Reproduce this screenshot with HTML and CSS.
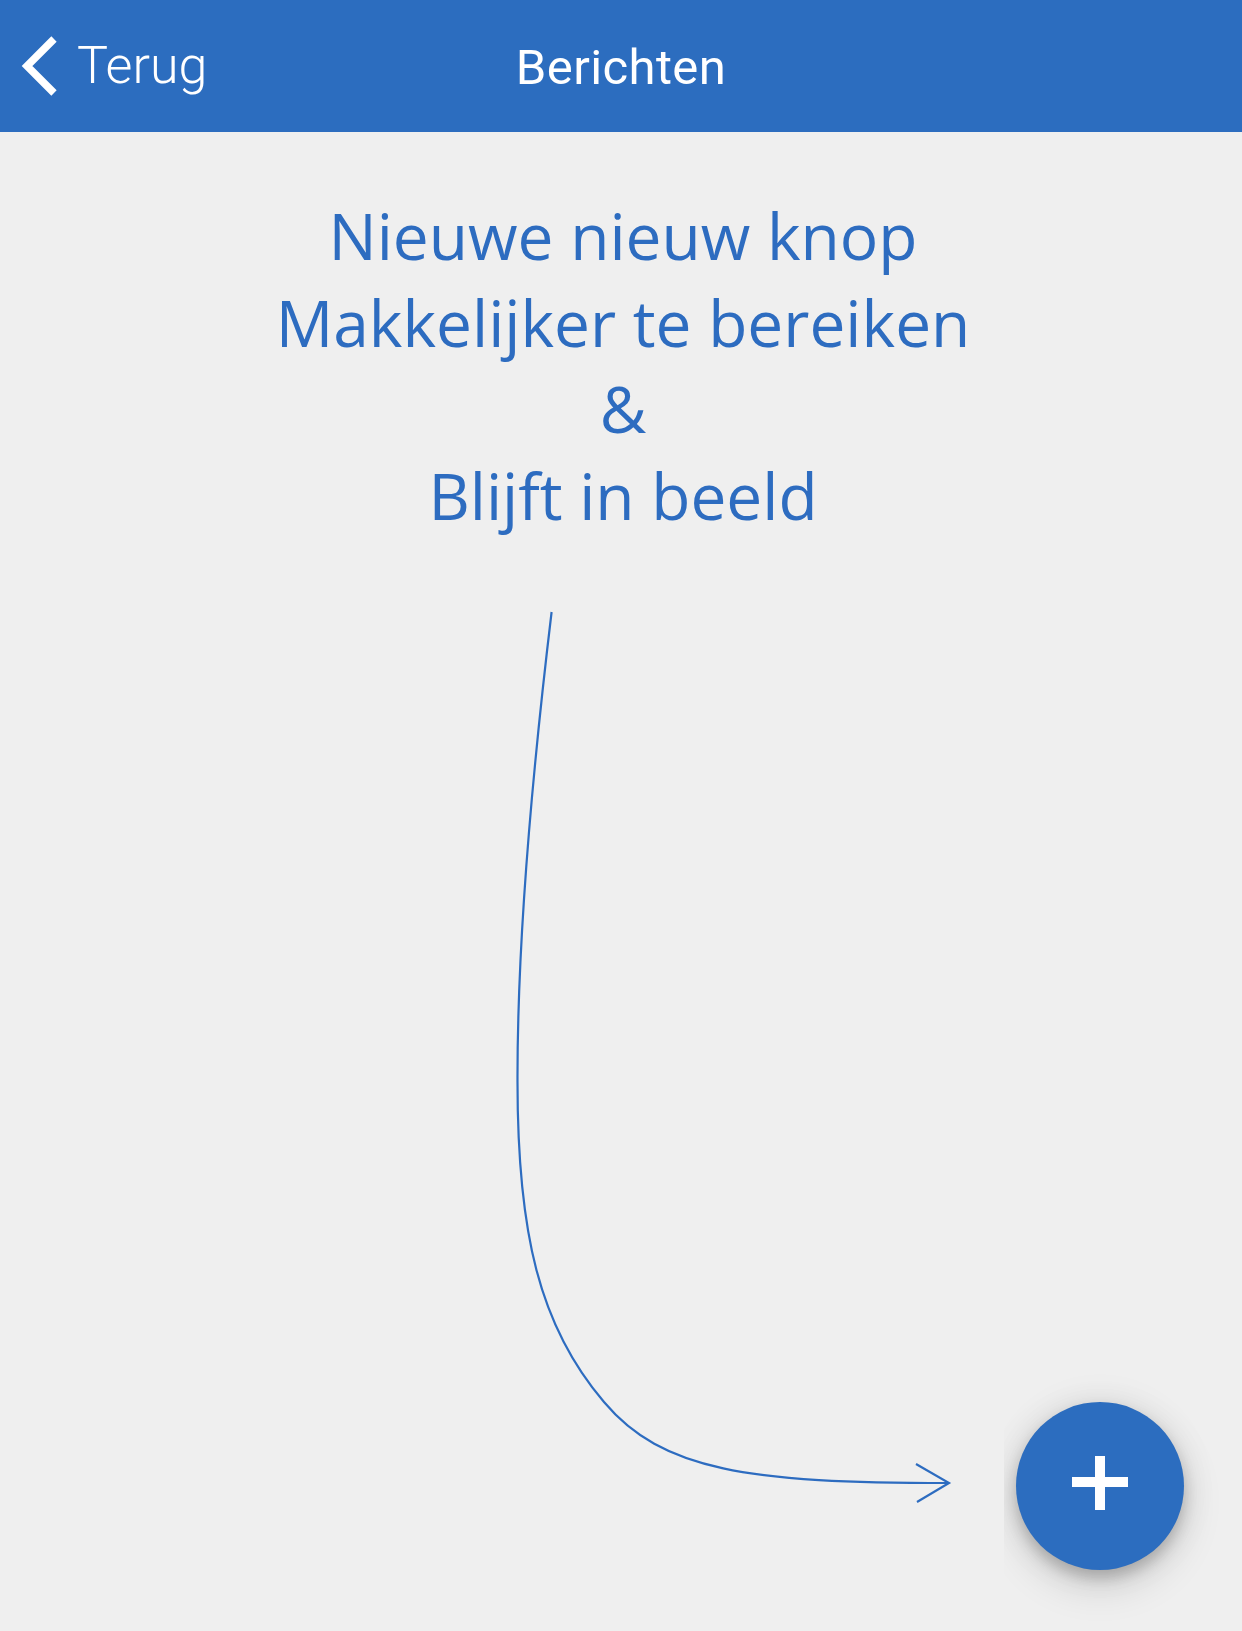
FILE: index.html
```html
<!DOCTYPE html>
<html lang="nl">
<head>
<meta charset="utf-8">
<title>Berichten</title>
<link rel="stylesheet" href="styles.css">
</head>
<body>
<div class="screen">
  <header class="topbar">
    <div class="topbar-left">
      <a class="back" href="#">
        <svg class="back-icon" width="40" height="64" viewBox="0 0 40 64" aria-hidden="true">
          <polyline points="34,5 7,32 34,59" fill="none" stroke="#fff" stroke-width="7.5" stroke-linejoin="miter" stroke-linecap="butt"/>
        </svg>
        <span class="back-label">Terug</span>
      </a>
    </div>
    <h1 class="title">Berichten</h1>
    <div class="topbar-right"></div>
  </header>

  <main class="content">
    <p class="note">Nieuwe nieuw knop<br>Makkelijker te bereiken<br>&amp;<br>Blijft in beeld</p>
  </main>

  <svg class="annotation" width="1242" height="1631" viewBox="0 0 1242 1631" aria-hidden="true">
    <path d="M551.6,612 Q517,900 517.5,1082 C517.5,1232 539,1326 604,1402 C662,1471 749,1483 949,1483" fill="none" stroke="#2d6cc0" stroke-width="2.2"/>
    <polyline points="916,1464 949,1483 917,1502" fill="none" stroke="#2d6cc0" stroke-width="2.2"/>
  </svg>

  <div class="fab-layer">
    <button class="fab" type="button" aria-label="Nieuw bericht">
      <span class="plus"></span>
    </button>
  </div>
</div>
</body>
</html>
```

FILE: styles.css
```css
* {
  box-sizing: border-box;
}

html, body {
  margin: 0;
  padding: 0;
}

body {
  background: #efefef;
  font-family: "Open Sans", "Noto Sans", sans-serif;
}

.screen {
  position: relative;
  width: 1242px;
  height: 1631px;
  overflow: hidden;
  background: #efefef;
}

.topbar {
  height: 132px;
  background: #2c6dbf;
  display: grid;
  grid-template-columns: 1fr auto 1fr;
  align-items: center;
  color: #fff;
}

.topbar-left {
  display: flex;
  align-items: center;
  padding-left: 20px;
}

.back {
  display: flex;
  align-items: center;
  gap: 17px;
  color: #fff;
  text-decoration: none;
}

.back-icon {
  display: block;
  margin-top: 0;
}

.back-label {
  font-family: Roboto, "Liberation Sans", sans-serif;
  font-weight: 300;
  font-size: 52px;
  line-height: 1;
  margin-top: 0;
}

.title {
  margin: 0;
  font-family: Roboto, "Liberation Sans", sans-serif;
  font-weight: 400;
  font-size: 49px;
  line-height: 1;
  letter-spacing: 0.4px;
  margin-top: 2px;
}

.content {
  padding-top: 61px;
  display: flex;
  justify-content: center;
}

.note {
  margin: 0;
  padding-left: 4px;
  text-align: center;
  font-family: "Open Sans", "Noto Sans", sans-serif;
  font-size: 64px;
  line-height: 86.7px;
  color: #2d6cc0;
}

.annotation {
  position: absolute;
  left: 0;
  top: 0;
  pointer-events: none;
}

.fab-layer {
  position: absolute;
  left: 1004px;
  right: 0;
  top: 1300px;
  bottom: 0;
  overflow: hidden;
}

.fab {
  position: absolute;
  left: 12px;
  top: 102px;
  width: 168px;
  height: 168px;
  border: none;
  border-radius: 50%;
  background: #2c6dbf;
  padding: 0;
  display: flex;
  align-items: center;
  justify-content: center;
  box-shadow: 0 8px 14px rgba(0, 0, 0, 0.18), 0 16px 40px rgba(0, 0, 0, 0.14), 0 0 36px rgba(0, 0, 0, 0.08);
}

.plus {
  position: relative;
  width: 56px;
  height: 54px;
  margin-top: -7px;
}

.plus::before,
.plus::after {
  content: "";
  position: absolute;
  background: #fff;
}

.plus::before {
  left: 0;
  top: 21px;
  width: 56px;
  height: 10px;
}

.plus::after {
  left: 23px;
  top: 0;
  width: 10px;
  height: 54px;
}
```
